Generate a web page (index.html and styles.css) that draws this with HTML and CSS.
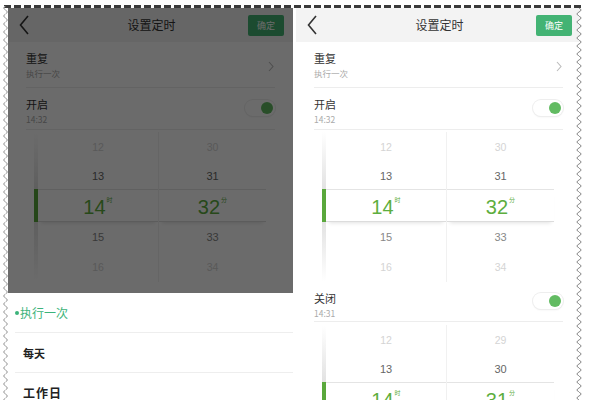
FILE: index.html
```html
<!DOCTYPE html>
<html lang="zh">
<head>
<meta charset="utf-8">
<title>设置定时</title>
<link rel="stylesheet" href="styles.css">
</head>
<body>
<div class="frame">
  <div class="phone">
    <div class="bar">
      <svg class="back" width="10" height="20" viewBox="0 0 10 20"><path d="M9 1 L1.5 10 L9 19" fill="none" stroke="#333" stroke-width="1.6"/></svg>
      <div class="title">设置定时</div>
      <div class="ok">确定</div>
    </div>
    <div class="row row-repeat">
      <div class="txt"><div class="label">重复</div><div class="sub">执行一次</div></div>
      <svg class="chev" width="6" height="11" viewBox="0 0 6 11"><path d="M1 1 L5 5.5 L1 10" fill="none" stroke="#bbb" stroke-width="1.1"/></svg>
    </div>
    <div class="row row-on">
      <div class="txt"><div class="label">开启</div><div class="sub">14:32</div></div>
      <div class="toggle"><span class="knob"></span></div>
    </div>
    <div class="picker">
      <div class="strip"><div class="s-top"></div><div class="s-sel"></div><div class="s-bot"></div></div>
      <div class="col">
        <div class="cell far">12</div><div class="cell near">13</div>
        <div class="cell sel"><span class="num">14</span><span class="unit">时</span></div>
        <div class="cell near2">15</div><div class="cell far">16</div>
      </div>
      <div class="col col2">
        <div class="cell far">30</div><div class="cell near">31</div>
        <div class="cell sel"><span class="num">32</span><span class="unit">分</span></div>
        <div class="cell near2">33</div><div class="cell far">34</div>
      </div>
    </div>
    <div class="overlay"></div>
    <div class="sheet">
      <div class="item active"><span class="dot"></span>执行一次</div>
      <div class="item">每天</div>
      <div class="item wide">工作日</div>
    </div>
  </div>

  <div class="phone">
    <div class="bar">
      <svg class="back" width="10" height="20" viewBox="0 0 10 20"><path d="M9 1 L1.5 10 L9 19" fill="none" stroke="#333" stroke-width="1.6"/></svg>
      <div class="title">设置定时</div>
      <div class="ok">确定</div>
    </div>
    <div class="row row-repeat">
      <div class="txt"><div class="label">重复</div><div class="sub">执行一次</div></div>
      <svg class="chev" width="6" height="11" viewBox="0 0 6 11"><path d="M1 1 L5 5.5 L1 10" fill="none" stroke="#bbb" stroke-width="1.1"/></svg>
    </div>
    <div class="row row-on">
      <div class="txt"><div class="label">开启</div><div class="sub">14:32</div></div>
      <div class="toggle"><span class="knob"></span></div>
    </div>
    <div class="picker">
      <div class="strip"><div class="s-top"></div><div class="s-sel"></div><div class="s-bot"></div></div>
      <div class="col">
        <div class="cell far">12</div><div class="cell near">13</div>
        <div class="cell sel"><span class="num">14</span><span class="unit">时</span></div>
        <div class="cell near2">15</div><div class="cell far">16</div>
      </div>
      <div class="col col2">
        <div class="cell far">30</div><div class="cell near">31</div>
        <div class="cell sel"><span class="num">32</span><span class="unit">分</span></div>
        <div class="cell near2">33</div><div class="cell far">34</div>
      </div>
    </div>
    <div class="row row-off">
      <div class="txt"><div class="label">关闭</div><div class="sub">14:31</div></div>
      <div class="toggle"><span class="knob"></span></div>
    </div>
    <div class="picker picker2">
      <div class="strip"><div class="s-top"></div><div class="s-sel"></div><div class="s-bot"></div></div>
      <div class="col">
        <div class="cell far">12</div><div class="cell near">13</div>
        <div class="cell sel"><span class="num">14</span><span class="unit">时</span></div>
        <div class="cell near2">15</div><div class="cell far">16</div>
      </div>
      <div class="col col2">
        <div class="cell far">29</div><div class="cell near">30</div>
        <div class="cell sel"><span class="num">31</span><span class="unit">分</span></div>
        <div class="cell near2">32</div><div class="cell far">33</div>
      </div>
    </div>
  </div>

  <div class="edge-top"></div>
  <svg class="edge-left" width="9" height="395">
    <defs>
      <pattern id="wl" width="9" height="8" patternUnits="userSpaceOnUse">
        <path d="M5.5 0 Q2 2 5.5 4 Q9 6 5.5 8 L0 8 L0 0 Z" fill="#fff"/>
        <path d="M5.5 0 Q2 2 5.5 4 Q9 6 5.5 8" fill="none" stroke="#999" stroke-width="1"/>
      </pattern>
    </defs>
    <rect width="9" height="395" fill="url(#wl)"/>
  </svg>
  <svg class="edge-right" width="14" height="392">
    <defs>
      <pattern id="wr" width="14" height="8" patternUnits="userSpaceOnUse">
        <path d="M4 0 Q8 2 4 4 Q0 6 4 8 L14 8 L14 0 Z" fill="#fff"/>
        <path d="M4 0 Q8 2 4 4 Q0 6 4 8" fill="none" stroke="#888" stroke-width="1"/>
      </pattern>
    </defs>
    <rect width="14" height="392" fill="url(#wr)"/>
  </svg>
</div>
</body>
</html>
```

FILE: styles.css
```css
* { box-sizing: border-box; margin: 0; padding: 0; }

body {
  width: 589px;
  height: 400px;
  overflow: hidden;
  background: #fff;
  font-family: "Noto Sans CJK SC", "Noto Sans", sans-serif;
  color: #333;
}

.frame {
  position: relative;
  display: flex;
  gap: 3px;
  padding: 8px 0 0 8px;
  height: 400px;
  overflow: hidden;
}

.phone {
  position: relative;
  flex: none;
  width: 285px;
  height: 392px;
  background: #fff;
  overflow: hidden;
}

/* header bar */
.bar {
  height: 34px;
  background: #f3f3f3;
  display: grid;
  grid-template-columns: 1fr auto 1fr;
  align-items: center;
  padding: 0 9px 0 11px;
}
.back { display: block; }
.title { font-size: 12px; color: #333; line-height: 14px; }
.ok {
  justify-self: end;
  width: 36px;
  height: 21px;
  border-radius: 2px;
  background: #43b374;
  color: #fff;
  font-size: 9px;
  display: flex;
  align-items: center;
  justify-content: center;
}

/* rows */
.row {
  margin: 0 18px;
  display: flex;
  justify-content: space-between;
  align-items: flex-start;
  padding-top: 9px;
  border-bottom: 1px solid #ededed;
}
.row-repeat { height: 46px; }
.row-on { height: 42px; }
.row-off { height: 40px; }
.label { font-size: 11px; line-height: 14px; color: #333; }
.sub { font-size: 8.5px; line-height: 12px; color: #aaa; margin-top: 2px; }
.chev { align-self: center; margin-top: -6px; margin-right: 1px; }

.toggle {
  align-self: center;
  margin-top: -10px;
  width: 30px;
  height: 16px;
  border-radius: 8px;
  background: #fff;
  box-shadow: 0 0 0 1px #eee, 0 1px 2px rgba(0,0,0,0.08);
  position: relative;
}
.knob {
  position: absolute;
  right: 2px;
  top: 2px;
  width: 12px;
  height: 12px;
  border-radius: 50%;
  background: #62bb62;
}

/* picker */
.picker {
  display: flex;
  margin: 2px 0 0 26px;
  width: 258px;
  height: 150px;
}
.picker2 { margin-top: 3px; }
.strip { width: 4px; display: flex; flex-direction: column; }
.s-top { height: 57px; background: linear-gradient(#fff, #e2e2e2); }
.s-sel { height: 33px; background: #5aa83c; }
.s-bot { height: 60px; background: linear-gradient(#e2e2e2, #fff); }

.col {
  width: 120px;
  display: flex;
  flex-direction: column;
  font-family: "Liberation Sans", Arial, sans-serif;
}
.col2 {
  width: 108px;
  border-left: 1px solid #f1f1f1;
}
.cell {
  height: 30px;
  display: flex;
  align-items: center;
  justify-content: center;
}
.cell.near { height: 27px; }
.far { color: #d4d4d4; font-size: 10.5px; }
.near, .near2 { color: #666; font-size: 11px; }
.near2 { color: #888; }
.cell.sel {
  height: 33px;
  border-top: 1px solid #e4e4e4;
  border-bottom: 1px solid #dcdcdc;
  box-shadow: 0 4px 4px -3px rgba(0,0,0,0.12);
  color: #5dae3e;
  font-size: 20px;
}
.num { padding-top: 3px; }
.unit {
  font-family: "Noto Sans CJK SC", sans-serif;
  font-size: 6px;
  align-self: flex-start;
  margin-top: 5px;
  margin-left: 1px;
}

/* overlay + sheet */
.overlay {
  position: absolute;
  inset: 0;
  z-index: 2;
  background: rgba(0,0,0,0.58);
}
.sheet {
  position: absolute;
  top: 285px;
  left: 0;
  right: 0;
  bottom: 0;
  z-index: 3;
  background: #fff;
}
.item {
  height: 40px;
  margin-left: 7px;
  padding-left: 8px;
  border-bottom: 1px solid #eee;
  display: flex;
  align-items: center;
  font-size: 11px;
  font-weight: bold;
  color: #222;
}
.item.active {
  padding-left: 0;
  font-size: 12px;
  font-weight: normal;
  color: #3cb37a;
}
.item.wide { font-size: 12px; letter-spacing: 1px; }
.dot {
  width: 4px;
  height: 4px;
  border-radius: 50%;
  background: #3cb37a;
  margin-right: 1px;
}

/* torn frame edges */
.edge-top {
  position: absolute;
  top: 5px;
  left: 4px;
  right: 8px;
  height: 3px;
  z-index: 5;
  background: repeating-linear-gradient(90deg, #3a3a3a 0 7px, transparent 7px 10px);
}
.edge-left {
  position: absolute;
  left: 0;
  top: 6px;
  z-index: 5;
}
.edge-right {
  position: absolute;
  left: 575px;
  top: 8px;
  z-index: 5;
}
```
